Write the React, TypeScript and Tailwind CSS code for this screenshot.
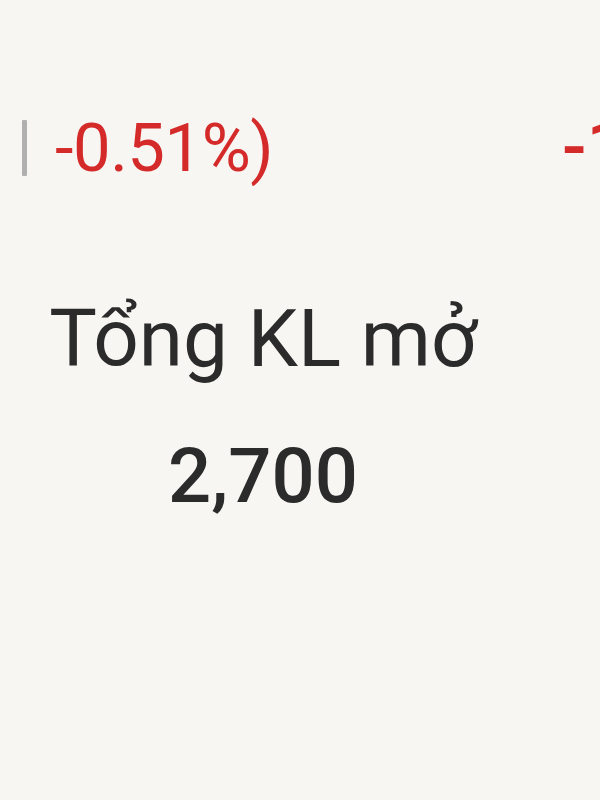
import React from "react";

export default function App() {
  return (
    <div
      className="w-[600px] h-[800px] bg-[#f7f6f3] overflow-hidden relative"
      style={{ fontFamily: "Roboto, 'Noto Sans', sans-serif" }}
    >
      <div className="flex items-start pt-[98px] whitespace-nowrap">
        <div className="flex w-[526px] shrink-0 items-center pl-[22px]">
          <span className="block w-[5px] h-[56px] bg-[#b0b0b0] rounded-[1px]" aria-hidden="true" />
          <span className="ml-[28px] text-[67px] leading-[100px] text-[#d42a2a] tracking-[-0.5px]">-0.51%)</span>
        </div>
        <div className="ml-[36px] text-[72px] leading-[100px] text-[#d42a2a] font-medium">-1.2</div>
      </div>
      <div className="flex w-[526px] flex-col items-center pt-[86px]">
        <div className="text-[80px] leading-[110px] text-[#2b2b2b]">Tổng KL mở</div>
        <div className="mt-[32px] text-[76px] leading-[100px] text-[#2b2b2b] font-medium">2,700</div>
      </div>
    </div>
  );
}
